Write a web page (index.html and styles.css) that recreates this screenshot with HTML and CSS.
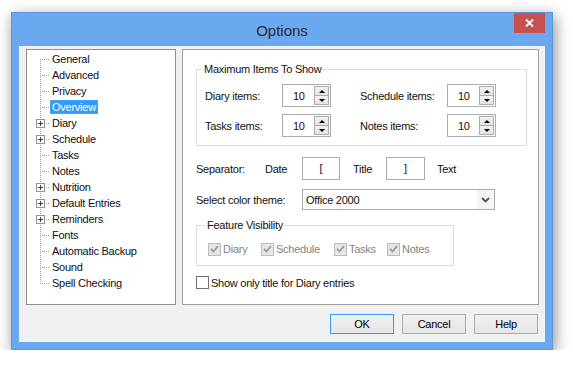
FILE: index.html
```html
<!DOCTYPE html>
<html lang="en">
<head>
    <meta charset="UTF-8">
    <title>Options</title>
    <link rel="stylesheet" href="styles.css">
</head>
<body>
    <!-- Dialog window -->
    <div class="dialog">
        <div class="dialog-title">
            <span class="dialog-caption">Options</span>
            <button class="dialog-close" title="Close">
                <svg width="9" height="8" viewBox="0 0 9 8"><path d="M1 0.5L8 7.5M8 0.5L1 7.5" stroke="#fff" stroke-width="1.9" fill="none"/></svg>
            </button>
        </div>

        <div class="dialog-client">
            <div class="panels">
                <!-- Category tree -->
                <ul class="tree">
                    <li class="tree-item first"><span class="tree-branch"></span><span class="tree-label">General</span></li>
                    <li class="tree-item"><span class="tree-branch"></span><span class="tree-label">Advanced</span></li>
                    <li class="tree-item"><span class="tree-branch"></span><span class="tree-label">Privacy</span></li>
                    <li class="tree-item selected"><span class="tree-branch"></span><span class="tree-label">Overview</span></li>
                    <li class="tree-item"><span class="tree-branch"><svg class="expander" width="9" height="9" viewBox="0 0 9 9"><rect x="0.5" y="0.5" width="8" height="8" fill="#fff" stroke="#919191"/><path d="M2 4.5H7M4.5 2V7" stroke="#3a3a5c"/></svg></span><span class="tree-label">Diary</span></li>
                    <li class="tree-item"><span class="tree-branch"><svg class="expander" width="9" height="9" viewBox="0 0 9 9"><rect x="0.5" y="0.5" width="8" height="8" fill="#fff" stroke="#919191"/><path d="M2 4.5H7M4.5 2V7" stroke="#3a3a5c"/></svg></span><span class="tree-label">Schedule</span></li>
                    <li class="tree-item"><span class="tree-branch"></span><span class="tree-label">Tasks</span></li>
                    <li class="tree-item"><span class="tree-branch"></span><span class="tree-label">Notes</span></li>
                    <li class="tree-item"><span class="tree-branch"><svg class="expander" width="9" height="9" viewBox="0 0 9 9"><rect x="0.5" y="0.5" width="8" height="8" fill="#fff" stroke="#919191"/><path d="M2 4.5H7M4.5 2V7" stroke="#3a3a5c"/></svg></span><span class="tree-label">Nutrition</span></li>
                    <li class="tree-item"><span class="tree-branch"><svg class="expander" width="9" height="9" viewBox="0 0 9 9"><rect x="0.5" y="0.5" width="8" height="8" fill="#fff" stroke="#919191"/><path d="M2 4.5H7M4.5 2V7" stroke="#3a3a5c"/></svg></span><span class="tree-label">Default Entries</span></li>
                    <li class="tree-item"><span class="tree-branch"><svg class="expander" width="9" height="9" viewBox="0 0 9 9"><rect x="0.5" y="0.5" width="8" height="8" fill="#fff" stroke="#919191"/><path d="M2 4.5H7M4.5 2V7" stroke="#3a3a5c"/></svg></span><span class="tree-label">Reminders</span></li>
                    <li class="tree-item"><span class="tree-branch"></span><span class="tree-label">Fonts</span></li>
                    <li class="tree-item"><span class="tree-branch"></span><span class="tree-label">Automatic Backup</span></li>
                    <li class="tree-item"><span class="tree-branch"></span><span class="tree-label">Sound</span></li>
                    <li class="tree-item last"><span class="tree-branch"></span><span class="tree-label">Spell Checking</span></li>
                </ul>

                <!-- Overview page -->
                <div class="page">
                    <fieldset class="group group-max">
                        <legend>Maximum Items To Show</legend>
                        <div class="items-grid">
                            <span>Diary items:</span>
                            <div class="spin"><span class="spin-value">10</span><span class="spin-buttons"><span class="spin-up"></span><span class="spin-down"></span></span></div>
                            <span>Schedule items:</span>
                            <div class="spin"><span class="spin-value">10</span><span class="spin-buttons"><span class="spin-up"></span><span class="spin-down"></span></span></div>
                            <span>Tasks items:</span>
                            <div class="spin"><span class="spin-value">10</span><span class="spin-buttons"><span class="spin-up"></span><span class="spin-down"></span></span></div>
                            <span>Notes items:</span>
                            <div class="spin"><span class="spin-value">10</span><span class="spin-buttons"><span class="spin-up"></span><span class="spin-down"></span></span></div>
                        </div>
                    </fieldset>

                    <div class="sep-row">
                        <span class="lbl-sep">Separator:</span>
                        <span class="lbl-date">Date</span>
                        <span class="sep-box">[</span>
                        <span class="lbl-title">Title</span>
                        <span class="sep-box wide">]</span>
                        <span class="lbl-text">Text</span>
                    </div>

                    <div class="theme-row">
                        <span class="lbl-theme">Select color theme:</span>
                        <div class="select">
                            <span class="select-value">Office 2000</span>
                            <span class="select-arrow"><svg width="9" height="6" viewBox="0 0 9 6"><path d="M1 1L4.5 4.5L8 1" stroke="#505050" stroke-width="1.8" fill="none"/></svg></span>
                        </div>
                    </div>

                    <fieldset class="group group-feature">
                        <legend>Feature Visibility</legend>
                        <div class="check-row">
                            <label class="check-item w53"><span class="check disabled"><svg width="9" height="8" viewBox="0 0 9 8"><path d="M1 4L3.5 6.5L8 1.2" stroke="#9a9a9a" stroke-width="1.8" fill="none"/></svg></span><span class="dim">Diary</span></label>
                            <label class="check-item w73"><span class="check disabled"><svg width="9" height="8" viewBox="0 0 9 8"><path d="M1 4L3.5 6.5L8 1.2" stroke="#9a9a9a" stroke-width="1.8" fill="none"/></svg></span><span class="dim">Schedule</span></label>
                            <label class="check-item w53"><span class="check disabled"><svg width="9" height="8" viewBox="0 0 9 8"><path d="M1 4L3.5 6.5L8 1.2" stroke="#9a9a9a" stroke-width="1.8" fill="none"/></svg></span><span class="dim">Tasks</span></label>
                            <label class="check-item"><span class="check disabled"><svg width="9" height="8" viewBox="0 0 9 8"><path d="M1 4L3.5 6.5L8 1.2" stroke="#9a9a9a" stroke-width="1.8" fill="none"/></svg></span><span class="dim">Notes</span></label>
                        </div>
                    </fieldset>

                    <label class="check-item show-only"><span class="check"></span><span>Show only title for Diary entries</span></label>
                </div>
            </div>

            <div class="buttons">
                <button class="btn btn-default">OK</button>
                <button class="btn">Cancel</button>
                <button class="btn">Help</button>
            </div>
        </div>
    </div>
</body>
</html>
```

FILE: styles.css
```css
/* Options dialog - Windows 8 look */
* {
    box-sizing: border-box;
}

body {
    margin: 0;
    background: #fff;
    font-family: "Liberation Sans", Arial, sans-serif;
    font-size: 11px;
    letter-spacing: -0.25px;
    color: #111;
}

.dialog {
    width: 542px;
    height: 338px;
    margin: 12px 0 0 11px;
    padding: 0 7px 7px;
    background: #6aa9f0;
    border: 1px solid #5a96dc;
    box-shadow: 2px 4px 14px rgba(0,0,0,0.45);
    display: flex;
    flex-direction: column;
}

.dialog-title {
    height: 33px;
    flex-shrink: 0;
    display: grid;
    grid-template-columns: 1fr auto 1fr;
}

.dialog-caption {
    grid-column: 2;
    align-self: center;
    font-size: 15px;
    letter-spacing: 0;
    color: #2a2a2a;
    padding-top: 1px;
}

.dialog-close {
    grid-column: 3;
    justify-self: end;
    width: 31px;
    height: 20px;
    padding: 0;
    border: none;
    background: #c75050;
    display: flex;
    align-items: center;
    justify-content: center;
}

.dialog-client {
    flex: 1;
    background: #f0f0f0;
    padding: 3px 6px 8px 7px;
    display: flex;
    flex-direction: column;
}

.panels {
    display: flex;
    gap: 6px;
    height: 256px;
}

/* Tree */
.tree {
    width: 150px;
    margin: 0;
    padding: 1px 0 0;
    list-style: none;
    background: #fff;
    border: 1px solid #8f8f8f;
}

.tree-item {
    display: flex;
    align-items: center;
    height: 16px;
}

.tree-branch {
    position: relative;
    width: 23px;
    height: 16px;
    flex-shrink: 0;
}

.tree-branch::before {
    content: '';
    position: absolute;
    left: 13px;
    top: 0;
    bottom: 0;
    width: 1px;
    background: repeating-linear-gradient(to bottom, #a0a0a0 0 1px, transparent 1px 2px);
}

.tree-item.first .tree-branch::before {
    top: 8px;
}

.tree-item.last .tree-branch::before {
    bottom: 7px;
}

.tree-branch::after {
    content: '';
    position: absolute;
    left: 14px;
    top: 8px;
    width: 9px;
    height: 1px;
    background: repeating-linear-gradient(to right, transparent 0 1px, #a0a0a0 1px 2px);
}

.expander {
    position: absolute;
    left: 9px;
    top: 4px;
    z-index: 1;
}

.tree-label {
    padding: 0 2px;
    height: 14px;
    line-height: 14px;
    white-space: nowrap;
}

.tree-item.selected .tree-label {
    background: #3399ff;
    color: #fff;
    outline: 1px dotted #d89038;
    outline-offset: -1px;
}

/* Right page */
.page {
    width: 357px;
    background: #fff;
    border: 1px solid #a0a0a0;
    padding: 13px 11px 0 13px;
}

.group {
    margin: 0;
    border: 1px solid #dcdcdc;
    min-width: 0;
}

.group legend {
    padding: 0 1px;
    margin-left: -2px;
    line-height: 13px;
}

.group-max {
    padding: 8px 0 8px 8px;
}

.items-grid {
    display: grid;
    grid-template-columns: 77px 78px 87px 49px;
    row-gap: 7px;
    align-items: center;
}

.spin {
    width: 49px;
    height: 23px;
    border: 1px solid #abadb3;
    background: #fff;
    display: flex;
    align-items: center;
}

.spin-value {
    padding-left: 10px;
}

.spin-buttons {
    margin-left: auto;
    margin-right: 1px;
    display: flex;
    flex-direction: column;
}

.spin-up,
.spin-down {
    width: 15px;
    height: 10px;
    border: 1px solid #acacac;
    background: linear-gradient(#f2f2f2, #e3e3e3);
    display: flex;
    align-items: center;
    justify-content: center;
}

.spin-down {
    margin-top: -1px;
}

.spin-up::before {
    content: '';
    border-left: 3px solid transparent;
    border-right: 3px solid transparent;
    border-bottom: 3px solid #000;
}

.spin-down::before {
    content: '';
    border-left: 3px solid transparent;
    border-right: 3px solid transparent;
    border-top: 3px solid #000;
}

.sep-row {
    display: flex;
    align-items: center;
    height: 23px;
    margin-top: 11px;
}

.lbl-sep {
    width: 69px;
}

.lbl-date {
    width: 37px;
}

.sep-box {
    width: 38px;
    height: 23px;
    line-height: 21px;
    text-align: center;
    border: 1px solid #acacac;
    background: #fff;
}

.sep-box.wide {
    width: 39px;
}

.lbl-title {
    width: 33px;
    margin-left: 13px;
}

.lbl-text {
    margin-left: 12px;
}

.theme-row {
    display: flex;
    align-items: center;
    margin-top: 9px;
}

.lbl-theme {
    width: 106px;
}

.select {
    width: 193px;
    height: 21px;
    border: 1px solid #acacac;
    background: #fff;
    display: flex;
    align-items: center;
}

.select-value {
    flex: 1;
    padding-left: 3px;
}

.select-arrow {
    width: 17px;
    height: 19px;
    background: #f5f5f5;
    display: flex;
    align-items: center;
    justify-content: center;
}

.group-feature {
    width: 258px;
    margin-top: 9px;
    padding: 10px 0 9px 11px;
}

.check-row {
    display: flex;
    align-items: center;
    height: 14px;
}

.check-item {
    display: flex;
    align-items: center;
    gap: 2px;
}

.w53 {
    width: 53px;
}

.w73 {
    width: 73px;
}

.check {
    width: 13px;
    height: 13px;
    flex-shrink: 0;
    border: 1px solid #707070;
    background: #fff;
    display: flex;
    align-items: center;
    justify-content: center;
}

.check.disabled {
    border-color: #bcbcbc;
    background: #e6e6e6;
}

.dim {
    color: #838383;
}

.show-only {
    margin-top: 10px;
}

/* Bottom buttons */
.buttons {
    display: flex;
    justify-content: flex-end;
    gap: 8px;
    margin-top: 9px;
    padding-right: 1px;
}

.btn {
    width: 64px;
    height: 20px;
    padding: 0;
    border: 1px solid #acacac;
    background: linear-gradient(#f0f0f0, #e5e5e5);
    font-family: inherit;
    font-size: 11px;
    letter-spacing: inherit;
    color: #000;
}

.btn-default {
    border-color: #3399ff;
}
```
